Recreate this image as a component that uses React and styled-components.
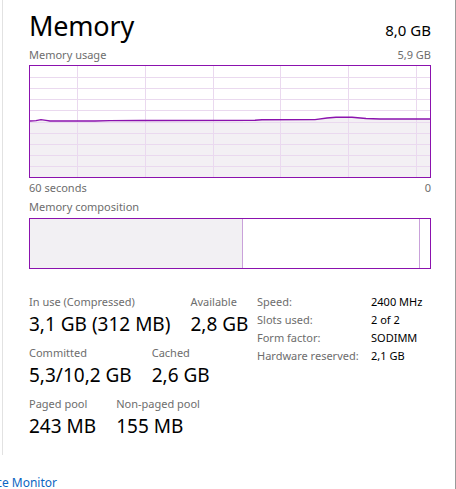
import React from "react";
import styled, { createGlobalStyle } from "styled-components";

const Global = createGlobalStyle`
  html, body { margin: 0; padding: 0; background: #fff; overflow: hidden; }
  body { font-family: "Noto Sans", "Open Sans", sans-serif; color: #000; }
`;

const PURPLE = "#8b12ae";

const Page = styled.div`
  width: 456px;
  height: 489px;
  box-sizing: border-box;
  border-right: 1px solid #9a9a9a;
  position: relative;
`;

const Panel = styled.div`
  margin-left: 2px;
  height: 455px;
  box-sizing: border-box;
  border-left: 1px solid #e2e2e2;
  padding: 10px 24px 0 26px;
  display: flex;
  flex-direction: column;
`;

const Header = styled.div`
  display: flex;
  justify-content: space-between;
  align-items: baseline;
`;

const Title = styled.h1`
  margin: 0;
  font-weight: 400;
  font-size: 27px;
  line-height: 32px;
  letter-spacing: -0.2px;
`;

const Total = styled.span`
  font-size: 15px;
  line-height: 20px;
`;

const CaptionRow = styled.div`
  display: flex;
  justify-content: space-between;
  font-size: 11px;
  line-height: 14px;
  color: #6d6d6d;
  margin-top: ${(p) => p.$mt || 0}px;
`;

const Graph = styled.div`
  margin-top: 3px;
  height: 113px;
  box-sizing: border-box;
  border: 1px solid ${PURPLE};
  display: flex;
`;

const Composition = styled.div`
  margin-top: 4px;
  height: 51px;
  box-sizing: border-box;
  border: 1px solid ${PURPLE};
  display: flex;
`;

const Segment = styled.div`
  flex: ${(p) => p.$grow} 0 0;
  background: ${(p) => (p.$filled ? "#f2f0f3" : "#fff")};
  border-right: ${(p) => (p.$divider ? "1px solid #c9a1da" : "none")};
`;

const Stats = styled.div`
  margin-top: 24px;
  display: flex;
`;

const LeftStats = styled.div`
  width: 228px;
  padding-top: 2px;
  display: flex;
  flex-direction: column;
  gap: 10px;
`;

const StatRow = styled.div`
  display: flex;
  gap: 20px;
`;

const Stat = styled.div`
  display: flex;
  flex-direction: column;
  gap: 3px;
`;

const StatLabel = styled.div`
  font-size: 11px;
  line-height: 14px;
  color: #6d6d6d;
  white-space: nowrap;
`;

const StatValue = styled.div`
  font-size: 19px;
  line-height: 24px;
  white-space: nowrap;
`;

const Specs = styled.div`
  display: grid;
  grid-template-columns: 114px auto;
  font-size: 11px;
  line-height: 18px;
  align-content: start;
`;

const SpecLabel = styled.span`
  color: #6d6d6d;
  white-space: nowrap;
`;

const SpecValue = styled.span`
  color: #000;
  white-space: nowrap;
`;

const Footer = styled.div`
  margin-top: 20px;
  width: 57px;
  display: flex;
  justify-content: flex-end;
  overflow: visible;
`;

const Link = styled.a`
  font-size: 12px;
  line-height: 16px;
  color: #0a66c2;
  white-space: nowrap;
  text-decoration: none;
`;

function UsageChart() {
  const W = 400;
  const H = 111;
  const hLines = Array.from({ length: 9 }, (_, i) => ((i + 1) * H) / 10);
  const vLines = [47, 115, 183, 250, 318, 386];
  const pts = [
    [0, 55],
    [6, 54.6],
    [11, 53.6],
    [16, 54.4],
    [20, 55],
    [65, 55],
    [80, 54.6],
    [110, 54.5],
    [225, 54.2],
    [232, 53.7],
    [285, 53.6],
    [297, 52],
    [306, 51.3],
    [322, 51.3],
    [336, 52.5],
    [350, 53],
    [400, 53],
  ];
  const line = pts.map(([x, y], i) => `${i ? "L" : "M"}${x} ${y}`).join(" ");
  const fill = `${line} L${W} ${H} L0 ${H} Z`;
  return (
    <svg width={W} height={H} viewBox={`0 0 ${W} ${H}`} style={{ display: "block" }}>
      <path d={fill} fill="#f3f0f4" />
      {hLines.map((y) => (
        <line key={y} x1={0} x2={W} y1={Math.round(y) + 0.5} y2={Math.round(y) + 0.5} stroke="#ead9ef" strokeWidth={1} />
      ))}
      {vLines.map((x) => (
        <line key={x} x1={x + 0.5} x2={x + 0.5} y1={0} y2={H} stroke="#ead9ef" strokeWidth={1} />
      ))}
      <path d={line} fill="none" stroke={PURPLE} strokeWidth={1.4} />
    </svg>
  );
}

export default function App() {
  return (
    <Page>
      <Global />
      <Panel>
        <Header>
          <Title>Memory</Title>
          <Total>8,0 GB</Total>
        </Header>
        <CaptionRow $mt={6}>
          <span>Memory usage</span>
          <span>5,9 GB</span>
        </CaptionRow>
        <Graph>
          <UsageChart />
        </Graph>
        <CaptionRow $mt={3}>
          <span>60 seconds</span>
          <span>0</span>
        </CaptionRow>
        <CaptionRow $mt={5}>
          <span>Memory composition</span>
        </CaptionRow>
        <Composition>
          <Segment $grow={213} $filled $divider />
          <Segment $grow={177} $divider />
          <Segment $grow={10} />
        </Composition>
        <Stats>
          <LeftStats>
            <StatRow>
              <Stat>
                <StatLabel>In use (Compressed)</StatLabel>
                <StatValue>3,1 GB (312 MB)</StatValue>
              </Stat>
              <Stat>
                <StatLabel>Available</StatLabel>
                <StatValue>2,8 GB</StatValue>
              </Stat>
            </StatRow>
            <StatRow>
              <Stat>
                <StatLabel>Committed</StatLabel>
                <StatValue>5,3/10,2 GB</StatValue>
              </Stat>
              <Stat>
                <StatLabel>Cached</StatLabel>
                <StatValue>2,6 GB</StatValue>
              </Stat>
            </StatRow>
            <StatRow>
              <Stat>
                <StatLabel>Paged pool</StatLabel>
                <StatValue>243 MB</StatValue>
              </Stat>
              <Stat>
                <StatLabel>Non-paged pool</StatLabel>
                <StatValue>155 MB</StatValue>
              </Stat>
            </StatRow>
          </LeftStats>
          <Specs>
            <SpecLabel>Speed:</SpecLabel>
            <SpecValue>2400 MHz</SpecValue>
            <SpecLabel>Slots used:</SpecLabel>
            <SpecValue>2 of 2</SpecValue>
            <SpecLabel>Form factor:</SpecLabel>
            <SpecValue>SODIMM</SpecValue>
            <SpecLabel>Hardware reserved:</SpecLabel>
            <SpecValue>2,1 GB</SpecValue>
          </Specs>
        </Stats>
      </Panel>
      <Footer>
        <Link href="#">Open Resource Monitor</Link>
      </Footer>
    </Page>
  );
}
